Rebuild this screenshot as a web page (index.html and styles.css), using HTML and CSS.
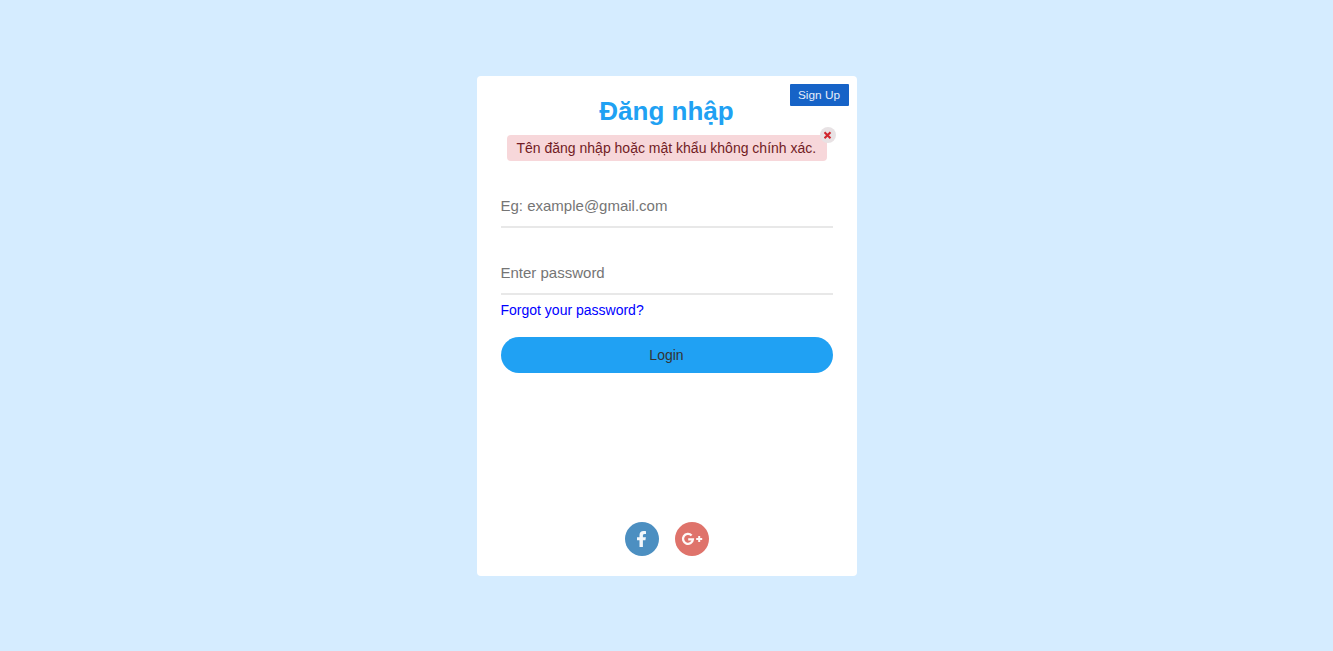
FILE: index.html
```html
<!DOCTYPE html>
<html lang="vi">
<head>
<meta charset="utf-8">
<title>Đăng nhập</title>
<link rel="stylesheet" href="styles.css">
</head>
<body>
<main class="card">
  <a class="signup" href="#">Sign Up</a>
  <h1 class="title">Đăng nhập</h1>
  <div class="alert">Tên đăng nhập hoặc mật khẩu không chính xác.
    <button class="alert-close" type="button" aria-label="Close">
      <svg width="8" height="8" viewBox="0 0 8 8"><path d="M.5 1.200l6 6M6.500 1.200l-6 6" stroke="#d0262e" stroke-width="2.100"/></svg>
    </button>
  </div>
  <form class="form">
    <input class="field" type="text" placeholder="Eg: example@gmail.com">
    <input class="field" type="password" placeholder="Enter password">
    <a class="forgot" href="#">Forgot your password?</a>
    <button class="login" type="button">Login</button>
  </form>
  <div class="social">
    <a class="social-link facebook" href="#" aria-label="Facebook">
      <svg width="34" height="34" viewBox="0 0 34 34"><path d="M14.500 25v-6.700h-2.500v-3.100h2.500v-2.100c0-2.700 1.600-4.100 4-4.100 1.100 0 2.500.2 2.500.2v2.700h-1.500c-1.300 0-1.600.8-1.600 1.500v1.800h3l-.5 3.100h-2.500V25z" fill="#fff" fill-opacity=".93"/></svg>
    </a>
    <a class="social-link google" href="#" aria-label="Google Plus">
      <svg width="34" height="34" viewBox="0 0 34 34"><path d="M16.600 13.500A4.950 4.950 0 1 0 17.900 17.300H13.200" fill="none" stroke="#fff" stroke-opacity=".95" stroke-width="2.300"/><path d="M24.200 14.100v6M21.200 17.100h6" stroke="#fff" stroke-opacity=".95" stroke-width="2"/></svg>
    </a>
  </div>
</main>
</body>
</html>
```

FILE: styles.css
```css
* {
  box-sizing: border-box;
}

body {
  margin: 0;
  min-height: 100vh;
  display: flex;
  align-items: flex-start;
  justify-content: center;
  padding: 76px 0 75px;
  background: #d5ecff;
  font-family: "Liberation Sans", Arial, sans-serif;
  font-size: 14px;
}

.card {
  position: relative;
  display: flex;
  flex-direction: column;
  width: 380px;
  height: 500px;
  padding: 20px 24px;
  border-radius: 4px;
  background: #fff;
}

.signup {
  position: absolute;
  top: 8px;
  right: 8px;
  width: 59px;
  border-radius: 1px;
  background: #1663c7;
  color: #e6eefa;
  font-size: 11.8px;
  line-height: 22px;
  text-align: center;
  text-decoration: none;
}

.title {
  margin: 0;
  color: #20a1f3;
  font-size: 26px;
  line-height: 30px;
  text-align: center;
}

.alert {
  position: relative;
  align-self: center;
  width: 320px;
  height: 26px;
  margin-top: 9px;
  padding: 0 10px;
  border-radius: 4px;
  background: #f7d7da;
  color: #721c24;
  line-height: 26px;
  white-space: nowrap;
}

.alert-close {
  position: absolute;
  top: -8px;
  right: -9px;
  display: flex;
  align-items: center;
  justify-content: center;
  width: 16px;
  height: 16px;
  padding: 0;
  border: 0;
  border-radius: 50%;
  background: #e8e2e4;
}

.form {
  display: flex;
  flex-direction: column;
  margin-top: 25px;
}

.field {
  height: 42px;
  margin: 0 0 25px;
  padding: 0 0 2px;
  border: 0;
  border-bottom: 2px solid #e8e8e8;
  outline: 0;
  background: none;
  font: 15px "Liberation Sans", Arial, sans-serif;
}

.field::placeholder {
  color: #757575;
}

.forgot {
  margin-top: -18px;
  align-self: flex-start;
  color: #00f;
  line-height: 16px;
  text-decoration: none;
}

.login {
  height: 36px;
  margin-top: 19px;
  border: 0;
  border-radius: 18px;
  background: #20a1f3;
  color: #333;
  font: 14px "Liberation Sans", Arial, sans-serif;
}

.social {
  display: flex;
  justify-content: center;
  gap: 16px;
  margin-top: auto;
}

.social-link {
  display: flex;
  width: 34px;
  height: 34px;
  border-radius: 50%;
}

.facebook {
  background: #4c8fc1;
}

.google {
  background: #df736b;
}
```
